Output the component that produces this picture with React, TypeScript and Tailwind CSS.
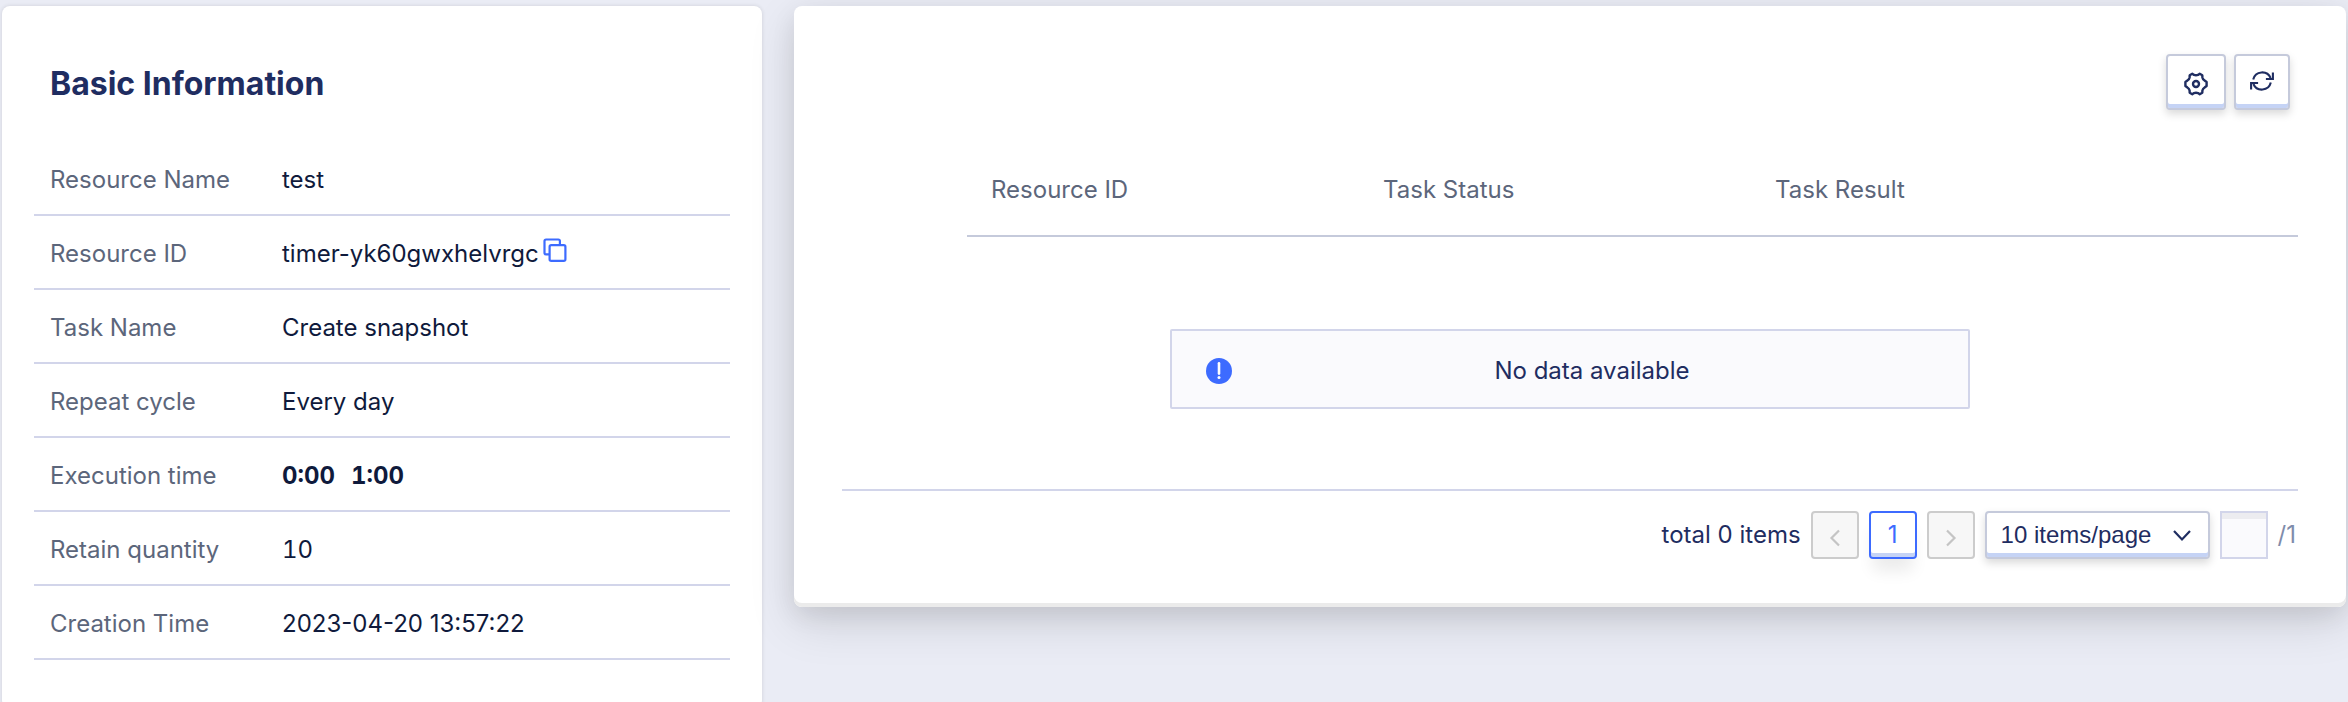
import React from "react";

type Detail = { label: string; value: React.ReactNode };

function CopyIcon() {
  return (
    <svg viewBox="0 0 24 24" className="size-6" fill="none" stroke="currentColor" strokeWidth="2.2">
      <rect x="6.6" y="7.1" width="15.8" height="15.8" rx="1.6" />
      <path d="M6.6 16.4H3.1a1.6 1.6 0 0 1-1.6-1.6V3.1a1.6 1.6 0 0 1 1.6-1.6h12.2a1.6 1.6 0 0 1 1.6 1.6v3.6" />
    </svg>
  );
}

function GearIcon() {
  return (
    <svg viewBox="0 0 24 24" className="size-6" fill="none" stroke="currentColor" strokeWidth="2.4" strokeLinejoin="round">
      <circle cx="12" cy="12" r="3" />
      <path d="M8.3 1.8 L10 2.9 Q12 3.6 14 2.9 L15.7 1.8 L18.3 3.3 L18.4 5.4 Q18.8 7.4 20.6 8.5 L22.6 10 V14 L20.6 15.5 Q18.8 16.6 18.4 18.6 L18.3 20.7 L15.7 22.2 L14 21.1 Q12 20.4 10 21.1 L8.3 22.2 L5.7 20.7 L5.6 18.6 Q5.2 16.6 3.4 15.5 L1.4 14 V10 L3.4 8.5 Q5.2 7.4 5.6 5.4 L5.7 3.3 Z" />
    </svg>
  );
}

function RefreshIcon() {
  return (
    <svg viewBox="0 0 24 24" className="size-6" fill="none" stroke="currentColor" strokeWidth="2.1">
      <path d="M3.2 10.4A9.2 9.2 0 0 1 20.6 9" />
      <path d="M22.900 3.6v6.4h-7" />
      <path d="M20.8 13.6A9.2 9.2 0 0 1 3.4 15" />
      <path d="M1.1 20.4v-6.4h7" />
    </svg>
  );
}

function Chevron({ d }: { d: string }) {
  return (
    <svg viewBox="0 0 20 20" className="size-5" fill="none" stroke="currentColor" strokeWidth="2.2">
      <path d={d} />
    </svg>
  );
}

const details: Detail[] = [
  { label: "Resource Name", value: "test" },
  {
    label: "Resource ID",
    value: (
      <span className="flex items-center gap-1">
        timer-yk60gwxhelvrgc
        <button type="button" aria-label="Copy resource ID" className="pb-2 text-[#3d6bff]">
          <CopyIcon />
        </button>
      </span>
    ),
  },
  { label: "Task Name", value: "Create snapshot" },
  { label: "Repeat cycle", value: "Every day" },
  {
    label: "Execution time",
    value: (
      <span className="flex gap-4 font-bold tabular-nums">
        <span>0:00</span>
        <span>1:00</span>
      </span>
    ),
  },
  { label: "Retain quantity", value: <span className="tabular-nums">10</span> },
  { label: "Creation Time", value: "2023-04-20 13:57:22" },
];

const toolButton =
  "flex h-14 items-center justify-center rounded border-2 border-[#c5cadb] bg-white text-[#1f2d61] shadow-[inset_0_-4px_0_#c5d3f5,0_4px_8px_rgba(0,0,0,0.15)]";
const disabledButton =
  "flex size-12 items-center justify-center rounded border-2 border-[#cccccc] bg-[#f7f7f7] pt-1.5 text-[#c4c4c4]";

function BasicInformation() {
  return (
    <section className="rounded-lg bg-white px-8 py-12 shadow-[0_0_4px_rgba(0,0,0,0.12)]">
      <h2 className="mb-8 pt-1 pl-4 text-[32px] leading-[52px] font-bold text-[#1f2d61]">Basic Information</h2>
      <dl>
        {details.map((item) => (
          <div key={item.label} className="flex h-[74px] items-center border-b-2 border-[#d2d5ea] px-4 pt-1">
            <dt className="w-[232px] shrink-0 text-[#5c667b]">{item.label}</dt>
            <dd className="text-[#0f1a3c]">{item.value}</dd>
          </div>
        ))}
      </dl>
    </section>
  );
}

function TaskList() {
  return (
    <section className="col-span-2 rounded-lg bg-white p-12 shadow-[inset_0_-4px_0_#ebebeb,0_16px_48px_rgba(0,0,0,0.12),0_8px_24px_rgba(0,0,0,0.08)]">
      <div className="mb-8 flex justify-end gap-2 pr-2">
        <button type="button" aria-label="Settings" className={`${toolButton} w-[60px] pt-1`}>
          <GearIcon />
        </button>
        <button type="button" aria-label="Refresh" className={`${toolButton} w-14 pb-0.5`}>
          <RefreshIcon />
        </button>
      </div>
      <table className="w-full table-fixed">
        <thead>
          <tr className="h-[94px] text-left text-[#5c667b]">
            <td className="w-[125px]" />
            <th className="w-[392px] border-b-2 border-[#c5cadb] px-6 pt-0.5 font-normal">Resource ID</th>
            <th className="w-[392px] border-b-2 border-[#c5cadb] px-6 pt-0.5 font-normal">Task Status</th>
            <th className="border-b-2 border-[#c5cadb] px-6 pt-0.5 font-normal">Task Result</th>
          </tr>
        </thead>
        <tbody>
          <tr className="border-b-2 border-[#d2d5ea]">
            <td colSpan={4} className="pt-[92px] pb-20">
              <div className="mx-auto flex h-20 max-w-[800px] items-center rounded-xs border-2 border-[#d2d5ea] bg-[#fafafd] pt-1 pr-8 pl-[34px] text-[#1f2d61]">
                <svg viewBox="0 0 26 26" className="size-[26px] text-[#3d6bff]">
                  <circle cx="13" cy="13" r="13" fill="currentColor" />
                  <path d="M13 5.2v10.4" stroke="white" strokeWidth="2.6" strokeLinecap="round" />
                  <circle cx="13" cy="19.6" r="1.5" fill="white" />
                </svg>
                <span className="ml-4 flex-1 text-center">No data available</span>
              </div>
            </td>
          </tr>
        </tbody>
      </table>
      <nav aria-label="Pagination" className="mt-5 flex items-center justify-end gap-2.5 pr-0.5 text-[#1f2d61]">
        <span>total 0 items</span>
        <button type="button" disabled aria-label="Previous page" className={disabledButton}>
          <Chevron d="M14 2.500L6.500 10l7.500 7.500" />
        </button>
        <button
          type="button"
          aria-current="page"
          className="flex size-12 items-center justify-center rounded border-2 border-[#3d6bff] bg-white text-[#3d6bff] shadow-[inset_0_-4px_0_#c5d3f5,0_16px_16px_-4px_rgba(0,0,0,0.08)]"
        >
          1
        </button>
        <button type="button" disabled aria-label="Next page" className={disabledButton}>
          <Chevron d="M6 2.500l7.500 7.500L6 17.500" />
        </button>
        <div className="relative">
          <select
            aria-label="Items per page"
            className="h-12 w-[225px] appearance-none rounded border-2 border-[#c5cadb] bg-white pl-3.5 font-['Liberation_Sans',Arial,sans-serif] text-2xl shadow-[inset_0_-4px_0_#c5d3f5,0_4px_8px_rgba(0,0,0,0.15)]"
          >
            <option>10 items/page</option>
            <option>20 items/page</option>
            <option>50 items/page</option>
          </select>
          <span className="pointer-events-none absolute inset-y-0 right-[18px] flex items-center">
            <Chevron d="M2 6l8 8.500L18 6" />
          </span>
        </div>
        <input
          type="text"
          aria-label="Go to page"
          className="size-12 border-2 border-[#d2d5ea] bg-[#fafafd] text-center shadow-[inset_0_6px_0_#ececf0]"
        />
        <span className="text-[#7f8cab]">/1</span>
      </nav>
    </section>
  );
}

export default function App() {
  return (
    <main className="grid h-screen grid-cols-3 items-start gap-8 overflow-hidden bg-[#eaecf5] px-0.5 pt-1.5 font-[Inter,sans-serif] text-2xl">
      <BasicInformation />
      <TaskList />
    </main>
  );
}
